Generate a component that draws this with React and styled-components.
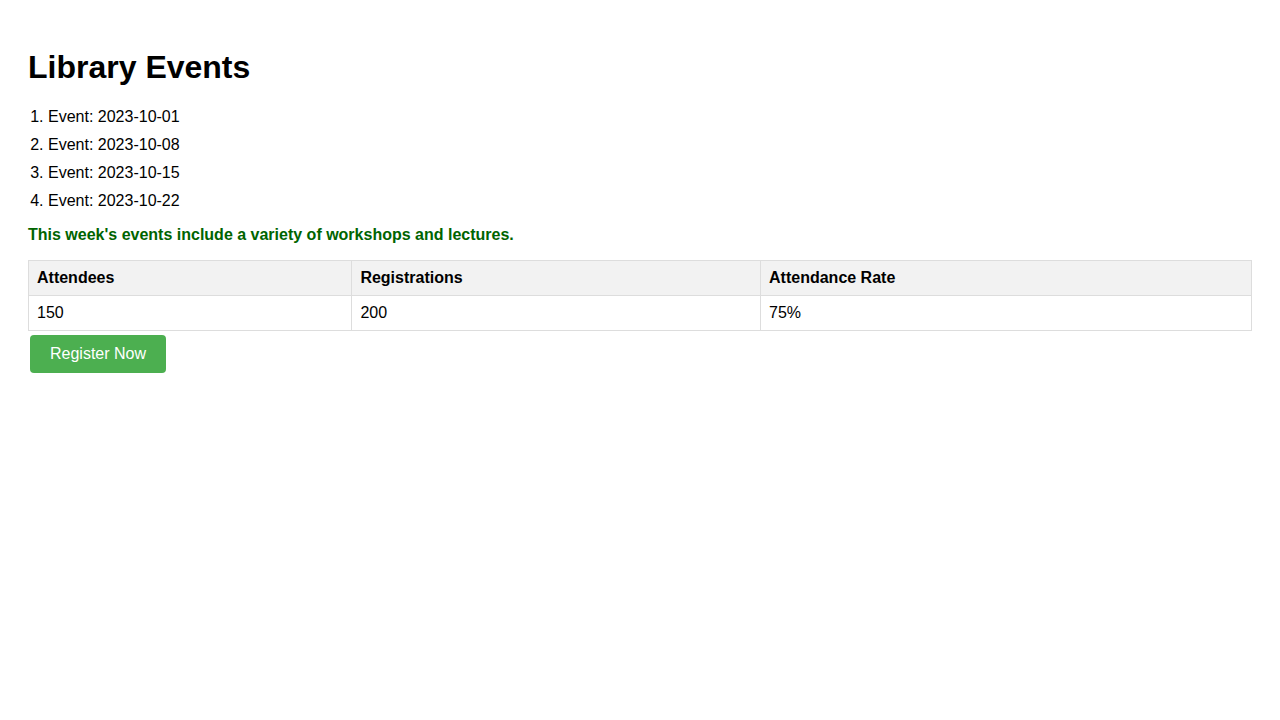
import React from 'react';
import styled, { createGlobalStyle } from 'styled-components';

const GlobalStyle = createGlobalStyle`
  body {
    margin: 8px;
    font-family: 'Liberation Sans', Arial, sans-serif;
    background: #fff;
    color: #000;
  }
`;

const Page = styled.div`
  padding: 20px;
`;

const Title = styled.h1`
  font-size: 32px;
  font-weight: 700;
  margin: 21px 0 22px;
`;

const EventList = styled.ol`
  margin: 0 0 16px;
  padding-left: 20px;
  font-size: 16px;
`;

const EventItem = styled.li`
  & + & {
    margin-top: 10px;
  }
`;

const Note = styled.p`
  margin: 0 0 16px;
  color: #006400;
  font-weight: 700;
  font-size: 16px;
`;

const Table = styled.table`
  width: 100%;
  border-collapse: collapse;
  font-size: 16px;
`;

const Cell = styled.td`
  border: 1px solid #ddd;
  padding: 8px;
  text-align: left;
`;

const HeadCell = styled(Cell).attrs({ as: 'th' })`
  background: #f2f2f2;
  font-weight: 700;
`;

const Button = styled.button`
  margin: 4px 2px 0;
  padding: 10px 20px;
  background: #4caf50;
  color: #fff;
  border: none;
  border-radius: 4px;
  font-family: 'Liberation Sans', Arial, sans-serif;
  font-size: 16px;
  cursor: pointer;
`;

const events = ['2023-10-01', '2023-10-08', '2023-10-15', '2023-10-22'];

export default function App() {
  return (
    <>
      <GlobalStyle />
      <Page>
        <Title>Library Events</Title>
        <EventList>
          {events.map(d => (
            <EventItem key={d}>Event: {d}</EventItem>
          ))}
        </EventList>
        <Note>This week's events include a variety of workshops and lectures.</Note>
        <Table>
          <thead>
            <tr>
              <HeadCell>Attendees</HeadCell>
              <HeadCell>Registrations</HeadCell>
              <HeadCell>Attendance Rate</HeadCell>
            </tr>
          </thead>
          <tbody>
            <tr>
              <Cell>150</Cell>
              <Cell>200</Cell>
              <Cell>75%</Cell>
            </tr>
          </tbody>
        </Table>
        <Button>Register Now</Button>
      </Page>
    </>
  );
}
